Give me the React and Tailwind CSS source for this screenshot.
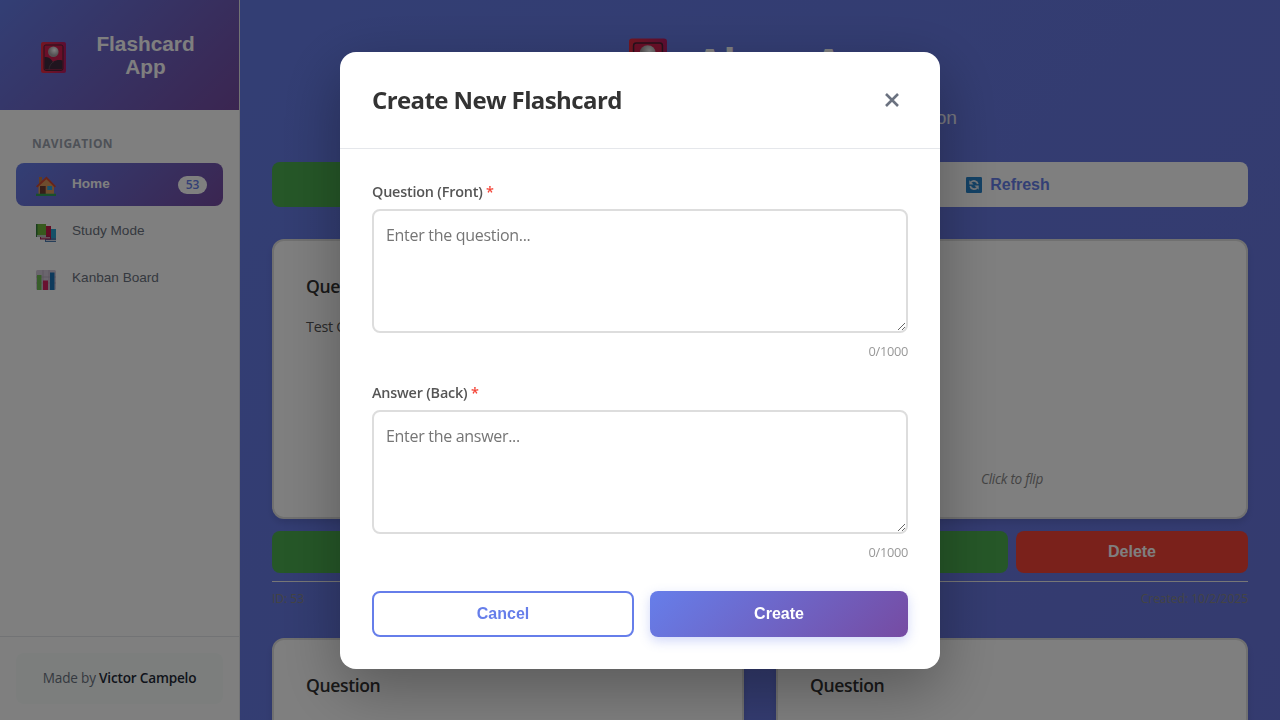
const SANS = "font-['Open_Sans','Noto_Sans',sans-serif]";
const ARIAL = "font-['Liberation_Sans',Arial,sans-serif]";

function CardEmoji({ className }) {
  return (
    <svg viewBox="0 0 25 31" className={className}>
      <defs>
        <linearGradient id="cardRed" x1="0" x2="1">
          <stop offset="0" stopColor="#e92c42" />
          <stop offset="1" stopColor="#b81c66" />
        </linearGradient>
        <radialGradient id="cardMoon" cx=".6" cy=".35">
          <stop offset="0" stopColor="#fff" />
          <stop offset="1" stopColor="#a9a3a6" />
        </radialGradient>
      </defs>
      <rect width="25" height="31" rx="2" fill="url(#cardRed)" />
      <rect x="3" y="3" width="19" height="25.5" rx="1.8" fill="#d41f50" stroke="#4c2336" strokeWidth="1" />
      <path d="M3.5 15c4 0 6 1 8.500 5 3-2 6-2.500 9.500-1.500v9h-18z" fill="#402b3e" />
      <path d="M8 28c0-4 2-7 5-8.500" fill="none" stroke="#66525e" strokeWidth=".8" />
      <circle cx="12.300" cy="9.700" r="5.300" fill="url(#cardMoon)" />
    </svg>
  );
}

function HouseEmoji() {
  return (
    <svg viewBox="0 0 20 20" className="size-5">
      <path d="M3 1h3v7H3z" fill="#c47a45" />
      <path d="M2.500 9.500 11 2l7 8v8.500h-15.500z" fill="#dd9a5c" />
      <path d="M0 10.300 10.500.6 20 10.300l-1.300 1.200-8.300-8.300-9 8.300z" fill="#d14a34" />
      <rect x="4" y="10" width="5.700" height="8" fill="#6d3d31" />
      <rect x="11.300" y="10" width="4.800" height="4" fill="#2fa5e0" />
      <path d="M0 17.700h20V20H0z" fill="#32a159" />
    </svg>
  );
}

function BooksEmoji() {
  return (
    <svg viewBox="0 0 20 20" className="size-5">
      <path d="M14 6h6v11h-6z" fill="#2ba3d1" />
      <path d="M9 15h11v4H9z" fill="#4f7fb5" />
      <path d="M10 17h10v1H10z" fill="#d8dbe6" />
      <path d="M10 3h5v11h-5z" fill="#c41c4b" />
      <path d="M4 12.500 15 13v3.500H4z" fill="#a91f50" />
      <path d="M5 14.300h9v1H5z" fill="#ddd" />
      <path d="M0 1h10v11H0z" fill="#6fb43a" />
      <path d="M0 1h1.500v13H0z" fill="#337d3c" />
      <path d="M1 12h9v2H1z" fill="#b9c4bb" />
    </svg>
  );
}

function ChartEmoji() {
  return (
    <svg viewBox="0 0 20 20" className="size-5">
      <rect width="20" height="20" rx="1.500" fill="#d5cadb" />
      <path d="M0 7h20M0 13h20M7 0v20M13 0v20" stroke="#b5a9bd" strokeWidth=".8" />
      <path d="M1 5h4.500v15H1z" fill="#70bd55" />
      <path d="M7 10.500h5V20H7z" fill="#d32461" />
      <path d="M14 2.500h4.500V20H14z" fill="#1d74b8" />
    </svg>
  );
}

function RefreshEmoji() {
  return (
    <svg viewBox="0 0 16 16" className="size-4">
      <rect width="16" height="16" rx="1.300" fill="#2784cb" />
      <path d="M11.800 7A4 4 0 0 0 5 5.200M4.200 9A4 4 0 0 0 11 10.800" fill="none" stroke="#e5edf5" strokeWidth="1.800" />
      <path d="M3.300 3.200v4.300h4.300zM12.700 12.800V8.500H8.400z" fill="#e5edf5" />
    </svg>
  );
}

function NavItem({ icon, label }) {
  return (
    <a className="flex h-[43px] items-center rounded-lg pl-5 pr-4">
      <span className="mt-[3px]">{icon}</span>
      <span className={`${ARIAL} ml-4 text-[13.600px] leading-5 text-[#6b7280] -mt-px`}>{label}</span>
    </a>
  );
}

function Sidebar() {
  return (
    <aside className="flex h-full w-60 shrink-0 flex-col border-r border-[#e5e7eb] bg-white">
      <div className="flex h-[110px] shrink-0 items-center bg-linear-[135deg] from-[#667eea] to-[#764ba2] pl-[41px]">
        <CardEmoji className="mt-1 h-[31px] w-[25px]" />
        <h1 className={`${ARIAL} ml-6 w-[111px] text-center text-[20.800px] leading-[23px] font-bold text-white`}>Flashcard App</h1>
      </div>
      <nav className="flex-1 px-4 pt-[23px]">
        <h2 className={`${SANS} mb-[9px] pl-4 text-[12px] leading-[21px] font-bold tracking-[0.400px] text-[#9ca3af]`}>NAVIGATION</h2>
        <div className="flex flex-col gap-1">
          <a className="flex h-[43px] items-center rounded-lg bg-linear-[135deg] from-[#667eea] to-[#764ba2] pl-5 pr-4">
            <span className="mt-[3px]"><HouseEmoji /></span>
            <span className={`${ARIAL} ml-4 flex-1 text-[13.600px] font-bold text-white`}>Home</span>
            <span className={`${SANS} flex h-[18px] w-[29px] items-center justify-center rounded-full bg-white text-[12px] font-semibold text-[#667eea]`}>53</span>
          </a>
          <NavItem icon={<BooksEmoji />} label="Study Mode" />
          <NavItem icon={<ChartEmoji />} label="Kanban Board" />
        </div>
      </nav>
      <footer className="h-[84px] border-t border-[#e5e7eb] px-4 pt-4">
        <p className={`${SANS} flex h-[51px] items-center justify-center rounded-lg bg-[#f8fdfb] text-[13.600px] tracking-[-0.200px] text-[#6b7280]`}>
          <span>Made by <strong className="font-semibold text-[#1f2937]">Victor Campelo</strong></span>
        </p>
      </footer>
    </aside>
  );
}

function Card({ text }) {
  return (
    <div className="flex h-[280px] flex-col rounded-xl border-2 border-[#e0e0e0] bg-white px-8 pt-[33px] pb-[28px] shadow-[0_4px_6px_rgba(0,0,0,0.1)]">
      <h3 className={`${SANS} text-[17.600px] leading-6 font-semibold tracking-[-0.400px] text-[#333]`}>Question</h3>
      <p className={`${SANS} mt-[17px] flex-1 text-[14.400px] leading-6 tracking-[-0.300px] text-[#555]`}>{text}</p>
      <p className={`${SANS} text-center text-[13.600px] leading-5 tracking-[-0.300px] text-[#888] italic`}>Click to flip</p>
    </div>
  );
}

function CardBlock({ id, text }) {
  return (
    <article>
      <Card text={text} />
      <div className={`${ARIAL} mt-3 flex h-[42px] gap-2 text-base font-bold text-white`}>
        <button className="flex-1 rounded-lg bg-[#4caf50]">Edit</button>
        <button className="flex-1 rounded-lg bg-[#f44336]">Delete</button>
      </div>
      <div className={`${SANS} mt-2 flex justify-between border-t border-[#eee] pt-[7px] text-[12px] leading-5 text-[#888]`}>
        <span>ID: {id}</span>
        <span>Created: 10/2/2025</span>
      </div>
    </article>
  );
}

function Field({ label, placeholder, className }) {
  return (
    <div className={className}>
      <label className="block text-[14.400px] leading-5 font-semibold tracking-[-0.200px] text-[#555]">
        {label} <span className="text-[#f44336]">*</span>
      </label>
      <textarea
        placeholder={placeholder}
        className="mt-[7px] block h-[124px] w-full resize-y rounded-lg border-2 border-[#ddd] px-3 py-3 text-base leading-6 tracking-[-0.300px] placeholder:text-[#757575]"
      />
      <p className="mt-2 text-right text-[12.800px] leading-5 tracking-[-0.300px] text-[#999]">0/1000</p>
    </div>
  );
}

function Modal() {
  return (
    <div className="fixed inset-0 flex items-start justify-center bg-black/50 pt-[52px]">
      <section className={`${SANS} h-[617px] w-[600px] rounded-2xl bg-white shadow-[0_20px_60px_rgba(0,0,0,0.3)]`}>
        <header className="flex h-[97px] items-center justify-between border-b border-[#e5e7eb] pr-8 pl-8">
          <h2 className="text-2xl font-bold tracking-[-0.600px] text-[#333]">Create New Flashcard</h2>
          <button aria-label="Close" className="flex size-8 items-center justify-center">
            <svg viewBox="0 0 14 14" className="size-3.5" fill="none" stroke="#6b7280" strokeWidth="2.600"><path d="m1 1 12 12M13 1 1 13" /></svg>
          </button>
        </header>
        <div className="px-8 pt-[33px]">
          <Field label="Question (Front)" placeholder="Enter the question..." />
          <Field className="mt-[22px]" label="Answer (Back)" placeholder="Enter the answer..." />
          <div className={`${ARIAL} mt-[29px] flex h-[46px] gap-4 text-base font-bold`}>
            <button className="flex-1 rounded-lg border-2 border-[#667eea] px-6 text-[#667eea]">Cancel</button>
            <button className="flex-1 rounded-lg bg-linear-[135deg] from-[#667eea] to-[#764ba2] px-6 text-white shadow-[0_4px_12px_rgba(102,126,234,0.3)]">Create</button>
          </div>
        </div>
      </section>
    </div>
  );
}

export default function App() {
  return (
    <div className="flex h-screen overflow-hidden bg-linear-[135deg] from-[#667eea] to-[#764ba2] bg-[length:100%_10800px]">
      <Sidebar />
      <main className="min-w-0 flex-1 px-8 pt-8">
        <header className="h-[130px]">
          <h1 className={`${SANS} ml-[357px] flex h-[60px] items-center text-[40px] font-bold text-white`}>
            <CardEmoji className="h-12 w-[38px]" />
            <span className="ml-[29px]">Alura App</span>
          </h1>
          <p className={`${ARIAL} mt-[14px] pr-[291px] text-right text-[19.200px] leading-6 text-white/90`}>Create cards for memorization</p>
        </header>
        <div className={`${ARIAL} flex h-[45px] gap-4 text-base font-bold`}>
          <button className="flex-1 rounded-lg bg-[#4caf50] text-white">New Card</button>
          <button className="flex flex-1 items-center justify-center gap-2 rounded-lg bg-white text-[#667eea]"><RefreshEmoji />Refresh</button>
        </div>
        <div className="mt-8 grid grid-cols-2 gap-x-8 gap-y-[29px]">
          <CardBlock id={53} text="Test Question" />
          <CardBlock id={52} text="" />
          <CardBlock id={51} text="" />
          <CardBlock id={50} text="" />
        </div>
      </main>
      <Modal />
    </div>
  );
}
